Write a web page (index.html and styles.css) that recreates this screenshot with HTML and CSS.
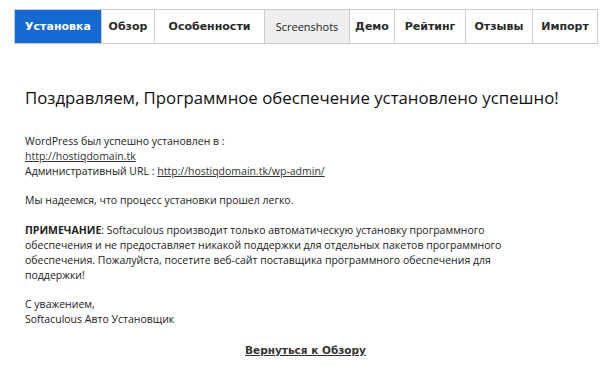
FILE: index.html
```html
<!DOCTYPE html>
<html lang="ru">
<head>
<meta charset="utf-8">
<title>Softaculous</title>
<link rel="stylesheet" href="styles.css">
</head>
<body>
<div class="page">
  <nav class="tabs">
    <a class="tab active">Установка</a>
    <a class="tab">Обзор</a>
    <a class="tab wide">Особенности</a>
    <a class="tab shots">Screenshots</a>
    <a class="tab">Демо</a>
    <a class="tab">Рейтинг</a>
    <a class="tab">Отзывы</a>
    <a class="tab">Импорт</a>
  </nav>
  <main class="content">
    <h1 class="title">Поздравляем, Программное обеспечение установлено успешно!</h1>
    <p class="para">WordPress был успешно установлен в :<br>
      <a class="link">http://hostiqdomain.tk</a><br>
      Административный URL : <a class="link">http://hostiqdomain.tk/wp-admin/</a></p>
    <p class="para">Мы надеемся, что процесс установки прошел легко.</p>
    <p class="para"><b>ПРИМЕЧАНИЕ</b>: Softaculous производит только автоматическую установку программного обеспечения и не предоставляет никакой поддержки для отдельных пакетов программного обеспечения. Пожалуйста, посетите веб-сайт поставщика программного обеспечения для поддержки!</p>
    <p class="para">С уважением,<br>Softaculous Авто Установщик</p>
    <p class="back"><a class="back-link">Вернуться к Обзору</a></p>
  </main>
</div>
</body>
</html>
```
FILE: styles.css
```css
html, body {
  margin: 0;
  padding: 0;
  background: #fff;
}
.page {
  padding: 9px 6px 0 14px;
  font-family: "Open Sans", "DejaVu Sans", sans-serif;
  color: #1a1a1a;
}
.tabs {
  display: flex;
  height: 35px;
  border: 1px solid #cccccc;
  box-sizing: border-box;
  width: 584px;
}
.tab {
  display: flex;
  align-items: center;
  justify-content: center;
  font-family: "DejaVu Sans", Verdana, sans-serif;
  font-weight: bold;
  font-size: 11px;
  color: #2a2a2a;
  border-right: 1px solid #cccccc;
  background: #fff;
}
.tab:nth-child(1) { width: 86px; }
.tab:nth-child(2) { width: 52px; }
.tab:nth-child(3) { width: 109px; }
.tab:nth-child(4) { width: 84px; }
.tab:nth-child(5) { width: 44px; }
.tab:nth-child(6) { width: 70px; }
.tab:nth-child(7) { width: 66px; }
.tab:nth-child(8) { width: 65px; border-right: 0; flex: 1; }
.tab.active {
  background: #1469d2;
  color: #fff;
}
.tab.shots {
  background: #efefef;
  font-family: "Open Sans", sans-serif;
  font-weight: normal;
  font-size: 11px;
  color: #222;
}
.content {
  padding: 0 11px;
}
.title {
  margin: 42px 0 24px;
  font-size: 16.8px;
  font-weight: normal;
  line-height: 24px;
  color: #111;
}
.para {
  max-width: 510px;
  margin: 0 0 15px;
  font-size: 10.5px;
  line-height: 14.8px;
  color: #222;
}
.para b {
  font-weight: bold;
}
.link {
  color: #333;
  text-decoration: underline;
}
.back {
  margin: 16px 0 0;
  text-align: center;
  font-size: 10.5px;
  line-height: 15px;
}
.back-link {
  font-family: "DejaVu Sans", Verdana, sans-serif;
  font-weight: bold;
  color: #333;
  text-decoration: underline;
}
```
